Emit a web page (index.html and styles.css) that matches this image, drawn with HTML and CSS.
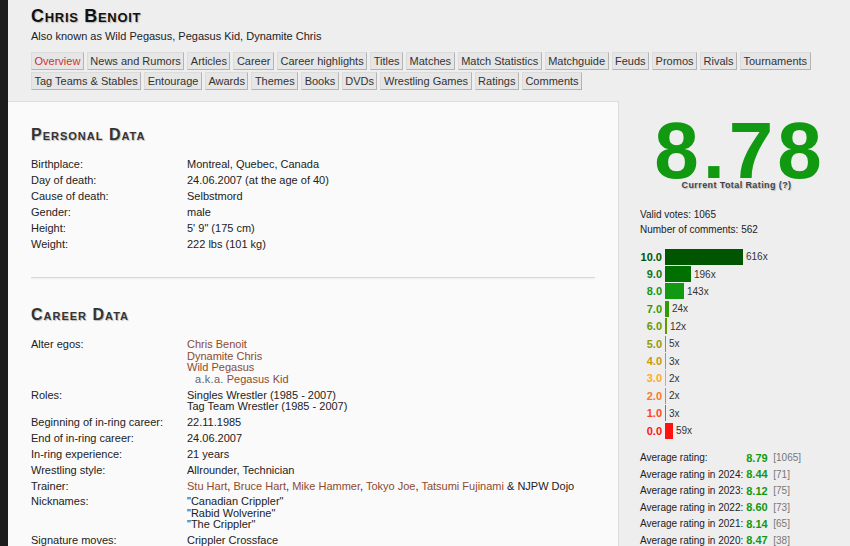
FILE: index.html
```html
<!DOCTYPE html>
<html>
<head>
<meta charset="utf-8">
<link rel="stylesheet" href="styles.css">
</head>
<body>
<div class="page">
  <header class="header">
    <h1 class="name">Chris Benoit</h1>
    <div class="aka">Also known as Wild Pegasus, Pegasus Kid, Dynamite Chris</div>
    <nav class="tabs first">
      <a class="tab active">Overview</a><a class="tab">News and Rumors</a><a class="tab">Articles</a><a class="tab">Career</a><a class="tab">Career highlights</a><a class="tab">Titles</a><a class="tab">Matches</a><a class="tab">Match Statistics</a><a class="tab">Matchguide</a><a class="tab">Feuds</a><a class="tab">Promos</a><a class="tab">Rivals</a><a class="tab">Tournaments</a>
    </nav>
    <nav class="tabs">
      <a class="tab">Tag Teams &amp; Stables</a><a class="tab">Entourage</a><a class="tab">Awards</a><a class="tab">Themes</a><a class="tab">Books</a><a class="tab">DVDs</a><a class="tab">Wrestling Games</a><a class="tab">Ratings</a><a class="tab">Comments</a>
    </nav>
  </header>
  <div class="content">
    <main class="main">
      <h2 class="section-title">Personal Data</h2>
      <div class="info">
        <div class="row"><div class="label">Birthplace:</div><div class="value">Montreal, Quebec, Canada</div></div>
        <div class="row"><div class="label">Day of death:</div><div class="value">24.06.2007 (at the age of 40)</div></div>
        <div class="row"><div class="label">Cause of death:</div><div class="value">Selbstmord</div></div>
        <div class="row"><div class="label">Gender:</div><div class="value">male</div></div>
        <div class="row"><div class="label">Height:</div><div class="value">5' 9" (175 cm)</div></div>
        <div class="row"><div class="label">Weight:</div><div class="value">222 lbs (101 kg)</div></div>
      </div>
      <hr class="divider">
      <h2 class="section-title">Career Data</h2>
      <div class="info">
        <div class="row"><div class="label">Alter egos:</div><div class="value"><a class="link">Chris Benoit</a><br><a class="link">Dynamite Chris</a><br><a class="link">Wild Pegasus</a><br><span class="akas">a.k.a.</span> <a class="link">Pegasus Kid</a></div></div>
        <div class="row"><div class="label">Roles:</div><div class="value">Singles Wrestler (1985 - 2007)<br>Tag Team Wrestler (1985 - 2007)</div></div>
        <div class="row"><div class="label">Beginning of in-ring career:</div><div class="value">22.11.1985</div></div>
        <div class="row"><div class="label">End of in-ring career:</div><div class="value">24.06.2007</div></div>
        <div class="row"><div class="label">In-ring experience:</div><div class="value">21 years</div></div>
        <div class="row"><div class="label">Wrestling style:</div><div class="value">Allrounder, Technician</div></div>
        <div class="row"><div class="label">Trainer:</div><div class="value"><a class="link">Stu Hart</a>, <a class="link">Bruce Hart</a>, <a class="link">Mike Hammer</a>, <a class="link">Tokyo Joe</a>, <a class="link">Tatsumi Fujinami</a> &amp; NJPW Dojo</div></div>
        <div class="row"><div class="label">Nicknames:</div><div class="value">"Canadian Crippler"<br>"Rabid Wolverine"<br>"The Crippler"</div></div>
        <div class="row"><div class="label">Signature moves:</div><div class="value">Crippler Crossface</div></div>
      </div>
    </main>
    <aside class="side">
      <div class="big-rating">8.78</div>
      <div class="rating-caption">Current Total Rating (?)</div>
      <div class="stats">
        <div>Valid votes: 1065</div>
        <div>Number of comments: 562</div>
      </div>
      <div class="dist">
        <div class="bar-row"><span class="bar-label c10">10.0</span><span class="bar b10" style="width:78px"></span><span class="count">616x</span></div>
        <div class="bar-row"><span class="bar-label c9">9.0</span><span class="bar b9" style="width:26px"></span><span class="count">196x</span></div>
        <div class="bar-row"><span class="bar-label c8">8.0</span><span class="bar b8" style="width:19px"></span><span class="count">143x</span></div>
        <div class="bar-row"><span class="bar-label c7">7.0</span><span class="bar b7" style="width:4px"></span><span class="count">24x</span></div>
        <div class="bar-row"><span class="bar-label c6">6.0</span><span class="bar b6" style="width:2px"></span><span class="count">12x</span></div>
        <div class="bar-row"><span class="bar-label c5">5.0</span><span class="bar b5" style="width:1px"></span><span class="count">5x</span></div>
        <div class="bar-row"><span class="bar-label c4">4.0</span><span class="bar b4" style="width:1px"></span><span class="count">3x</span></div>
        <div class="bar-row"><span class="bar-label c3">3.0</span><span class="bar b3" style="width:1px"></span><span class="count">2x</span></div>
        <div class="bar-row"><span class="bar-label c2">2.0</span><span class="bar b2" style="width:1px"></span><span class="count">2x</span></div>
        <div class="bar-row"><span class="bar-label c1">1.0</span><span class="bar b1" style="width:1px"></span><span class="count">3x</span></div>
        <div class="bar-row"><span class="bar-label c0">0.0</span><span class="bar b0" style="width:8px"></span><span class="count">59x</span></div>
      </div>
      <div class="avgs">
        <span class="avg-label">Average rating:</span><span class="avg-val">8.79</span><span class="avg-n">[1065]</span>
        <span class="avg-label">Average rating in 2024:</span><span class="avg-val">8.44</span><span class="avg-n">[71]</span>
        <span class="avg-label">Average rating in 2023:</span><span class="avg-val">8.12</span><span class="avg-n">[75]</span>
        <span class="avg-label">Average rating in 2022:</span><span class="avg-val">8.60</span><span class="avg-n">[73]</span>
        <span class="avg-label">Average rating in 2021:</span><span class="avg-val">8.14</span><span class="avg-n">[65]</span>
        <span class="avg-label">Average rating in 2020:</span><span class="avg-val">8.47</span><span class="avg-n">[38]</span>
      </div>
    </aside>
  </div>
</div>
</body>
</html>
```

FILE: styles.css
```css
html, body {
  margin: 0;
  padding: 0;
}
body {
  background: #1c1c1c;
  font-family: "Liberation Sans", Arial, sans-serif;
  font-size: 11px;
  color: #222;
  height: 546px;
  overflow: hidden;
}
.page {
  margin-left: 8px;
  background: #eeeeee;
  min-height: 546px;
}
.header {
  padding: 6px 0 0 23px;
  height: 101px;
  box-sizing: border-box;
}
.name {
  margin: 0;
  font-size: 18px;
  line-height: 20px;
  font-weight: bold;
  font-variant: small-caps;
  letter-spacing: 0.7px;
  color: #111;
  text-shadow: 1px 1px 1px #bbb;
}
.aka {
  margin-top: 4px;
  font-size: 11px;
  line-height: 13px;
  color: #222;
}
.tabs {
  display: flex;
  gap: 3px;
  margin-top: 2px;
}
.tabs.first {
  margin-top: 9px;
}
.tab {
  display: block;
  height: 16px;
  line-height: 16px;
  padding: 0 2.5px 0 2.5px;
  background: #e6e6e6;
  border: 1px solid #dcdcdc;
  border-right-color: #b4b4b4;
  border-bottom-color: #b4b4b4;
  color: #333;
  font-size: 11px;
  white-space: nowrap;
}
.tab.active {
  color: #cc3333;
}
.content {
  display: flex;
  align-items: flex-start;
}
.main {
  width: 611px;
  box-sizing: border-box;
  background: #fafafa;
  border-top: 1px solid #dddddd;
  border-right: 1px solid #dddddd;
  padding: 23px 23px 20px 23px;
  min-height: 452px;
}
.section-title {
  margin: 0 0 12px 0;
  font-size: 16px;
  line-height: 20px;
  font-weight: bold;
  font-variant: small-caps;
  letter-spacing: 1px;
  color: #333;
  text-shadow: 1px 1px 1px #bbb;
}
.info {
  display: flex;
  flex-direction: column;
}
.row {
  display: flex;
  padding: 2px 0 2.5px 0;
  line-height: 11.4px;
}
.label {
  width: 156px;
  flex: none;
}
.value {
  flex: 1;
}
.link {
  color: #8e4a2e;
  text-decoration: none;
}
.akas {
  color: #666;
  margin-left: 8px;
  letter-spacing: 0.3px;
}
.divider {
  border: none;
  height: 1px;
  background: #dcd8da;
  box-shadow: 0 1px 1px #eee;
  margin: 25px 0 27px 0;
}
.side {
  width: 231px;
  padding-top: 20px;
  box-sizing: border-box;
  font-size: 10px;
}
.big-rating {
  text-align: center;
  font-size: 80px;
  line-height: 60px;
  font-weight: bold;
  color: #119911;
  letter-spacing: 4px;
  padding-left: 11px;
}
.rating-caption {
  text-align: center;
  font-size: 9px;
  line-height: 10px;
  font-weight: bold;
  color: #444;
  letter-spacing: 0.4px;
  text-shadow: 1px 1px 1px #bbb;
  margin-top: -1px;
  padding-left: 4px;
}
.stats {
  margin: 17px 0 0 21px;
  line-height: 15px;
}
.dist {
  margin-top: 11px;
}
.bar-row {
  display: flex;
  align-items: center;
  height: 17.4px;
}
.bar-label {
  width: 46px;
  text-align: right;
  font-weight: bold;
  font-size: 11px;
  padding-right: 3px;
  box-sizing: border-box;
  flex: none;
}
.bar {
  height: 16px;
  flex: none;
}
.count {
  margin-left: 3px;
  font-size: 10px;
  color: #333;
}
.c10 { color: #005500; }
.c9 { color: #117711; }
.c8 { color: #119911; }
.c7 { color: #339900; }
.c6 { color: #669900; }
.c5 { color: #999900; }
.c4 { color: #cc9900; }
.c3 { color: #ffaa22; }
.c2 { color: #ff7722; }
.c1 { color: #ff4422; }
.c0 { color: #ff1111; }
.b10 { background: #005500; }
.b9 { background: #007000; }
.b8 { background: #119911; }
.b7 { background: #339900; }
.b6 { background: #669900; }
.b5 { background: #999900; }
.b4 { background: #cc9900; }
.b3 { background: #ffaa22; }
.b2 { background: #ff7722; }
.b1 { background: #ff4422; }
.b0 { background: #ff1111; }
.avgs {
  margin: 10px 0 0 21px;
  display: grid;
  grid-template-columns: auto 27px auto;
  justify-content: start;
  grid-auto-rows: 16.5px;
  align-items: center;
}
.avg-label {
  white-space: nowrap;
  padding-right: 3px;
}
.avg-val {
  font-weight: bold;
  font-size: 11px;
  color: #119911;
}
.avg-n {
  color: #777;
}
```
